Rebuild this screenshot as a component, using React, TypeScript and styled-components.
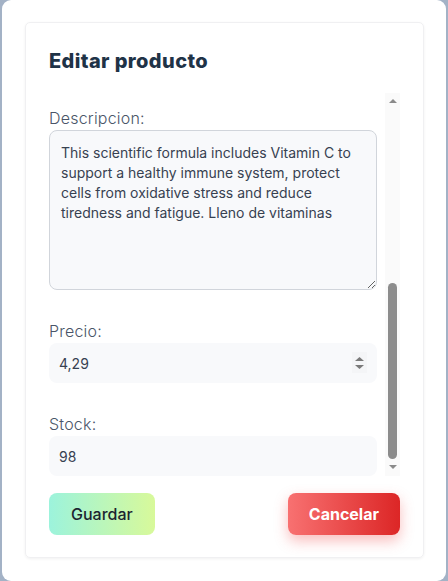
import React, { useLayoutEffect, useRef } from 'react'
import styled, { createGlobalStyle } from 'styled-components'

const GlobalStyle = createGlobalStyle`
  html, body {
    margin: 0;
    padding: 0;
    background: #a3b2c6;
    font-family: Inter, 'Noto Sans', sans-serif;
  }
`

const description =
  'This scientific formula includes Vitamin C to support a healthy immune system, protect cells from oxidative stress and reduce tiredness and fatigue. Lleno de vitaminas'

export default function App() {
  const scrollRef = useRef<HTMLDivElement>(null)

  useLayoutEffect(() => {
    if (scrollRef.current) {
      scrollRef.current.scrollTop = scrollRef.current.scrollHeight
    }
  }, [])

  return (
    <>
      <GlobalStyle />
      <Modal>
        <Card>
          <Title>Editar producto</Title>
          <ScrollRow>
            <ScrollArea ref={scrollRef}>
              <Preview>
                <svg width="48" height="48" viewBox="0 0 24 24" fill="none" stroke="#c3c8d0" strokeWidth="1.5">
                  <rect x="3" y="3" width="18" height="18" rx="2" />
                  <circle cx="9" cy="9" r="2" />
                  <path d="M21 15l-5-5L5 21" />
                </svg>
              </Preview>
              <Field>
                <Label>Descripcion:</Label>
                <TextArea defaultValue={description} />
              </Field>
              <Field>
                <Label>Precio:</Label>
                <InputWrap>
                  <Input defaultValue="4,29" />
                  <Spinner>
                    <svg width="9" height="14" viewBox="0 0 9 14">
                      <path d="M0 5 L4.5 1 L9 5 Z" fill="#7a7a7a" />
                      <path d="M0 9 L4.5 13 L9 9 Z" fill="#7a7a7a" />
                    </svg>
                  </Spinner>
                </InputWrap>
              </Field>
              <Field $last>
                <Label>Stock:</Label>
                <Input defaultValue="98" />
              </Field>
            </ScrollArea>
            <Scrollbar>
              <Arrow $up />
              <Track>
                <Thumb />
              </Track>
              <Arrow />
            </Scrollbar>
          </ScrollRow>
          <Actions>
            <SaveButton>Guardar</SaveButton>
            <CancelButton>Cancelar</CancelButton>
          </Actions>
        </Card>
      </Modal>
    </>
  )
}

const Modal = styled.div`
  box-sizing: border-box;
  margin: 0 2px;
  height: 581px;
  background: #fff;
  border-radius: 9px;
  padding: 22px 22px 23px 23px;
`

const Card = styled.div`
  box-sizing: border-box;
  height: 536px;
  border: 1px solid #f0f0f2;
  border-radius: 5px;
  box-shadow: 0 1px 3px rgba(0, 0, 0, 0.06);
  padding: 23px 23px 23px 23px;
  display: flex;
  flex-direction: column;
`

const Title = styled.h2`
  margin: 0 0 17px;
  font-size: 20px;
  line-height: 30px;
  font-weight: 800;
  color: #1f3347;
  letter-spacing: 0.4px;
`

const ScrollRow = styled.div`
  display: flex;
  height: 383px;
`

const ScrollArea = styled.div`
  flex: 1;
  overflow-y: auto;
  padding-right: 8px;
  scrollbar-width: none;
  &::-webkit-scrollbar {
    display: none;
  }
`

const Preview = styled.div`
  height: 360px;
  margin-bottom: 30px;
  border-radius: 8px;
  background: #f8f9fb;
  display: flex;
  align-items: center;
  justify-content: center;
`

const Scrollbar = styled.div`
  width: 15px;
  background: #fafafa;
  display: flex;
  flex-direction: column;
  align-items: center;
`

const Arrow = styled.div<{ $up?: boolean }>`
  width: 0;
  height: 0;
  margin: ${(p) => (p.$up ? '6px 0 4px' : '6px 0 7px')};
  border-left: 4.5px solid transparent;
  border-right: 4.5px solid transparent;
  ${(p) =>
    p.$up ? 'border-bottom: 4px solid #8a8a8a;' : 'border-top: 4px solid #8a8a8a;'}
`

const Track = styled.div`
  flex: 1;
  width: 100%;
  display: flex;
  flex-direction: column;
  justify-content: flex-end;
  align-items: center;
`

const Thumb = styled.div`
  width: 9px;
  height: 176px;
  background: #8c8c8c;
  border-radius: 5px;
`

const Field = styled.div<{ $last?: boolean }>`
  display: flex;
  flex-direction: column;
  margin-bottom: ${(p) => (p.$last ? '0' : '30px')};
`

const Label = styled.label`
  font-size: 16px;
  line-height: 22px;
  font-weight: 300;
  color: #4a5568;
  margin-bottom: 1px;
  letter-spacing: 0.2px;
`

const InputWrap = styled.div`
  position: relative;
`

const Input = styled.input`
  box-sizing: border-box;
  width: 100%;
  height: 40px;
  border: none;
  border-radius: 8px;
  background: #f8f9fb;
  padding: 0 10px;
  font-family: inherit;
  font-size: 14px;
  color: #374151;
  outline: none;
`

const Spinner = styled.div`
  position: absolute;
  right: 10px;
  top: 9px;
  width: 15px;
  height: 21px;
  background: #f4f5f7;
  display: flex;
  align-items: center;
  justify-content: center;
`

const TextArea = styled.textarea`
  box-sizing: border-box;
  width: 100%;
  height: 160px;
  border: 1px solid #d1d5db;
  border-radius: 8px;
  background: #f8f9fb;
  padding: 12px 11px;
  font-family: inherit;
  font-size: 14px;
  line-height: 20px;
  color: #374151;
  outline: none;
`

const Actions = styled.div`
  display: flex;
  justify-content: space-between;
  margin-top: 17px;
`

const BaseButton = styled.button`
  height: 42px;
  border: none;
  border-radius: 8px;
  padding: 0 22px;
  font-family: inherit;
  font-size: 16px;
  cursor: pointer;
`

const SaveButton = styled(BaseButton)`
  background: linear-gradient(90deg, #9cf3dc, #d8f99a);
  color: #1c2430;
  font-weight: 500;
`

const CancelButton = styled(BaseButton)`
  padding: 0 21px;
  background: linear-gradient(90deg, #f87171, #dc2626);
  color: #fff;
  font-weight: 700;
  box-shadow: 0 6px 14px rgba(239, 68, 68, 0.35);
`
